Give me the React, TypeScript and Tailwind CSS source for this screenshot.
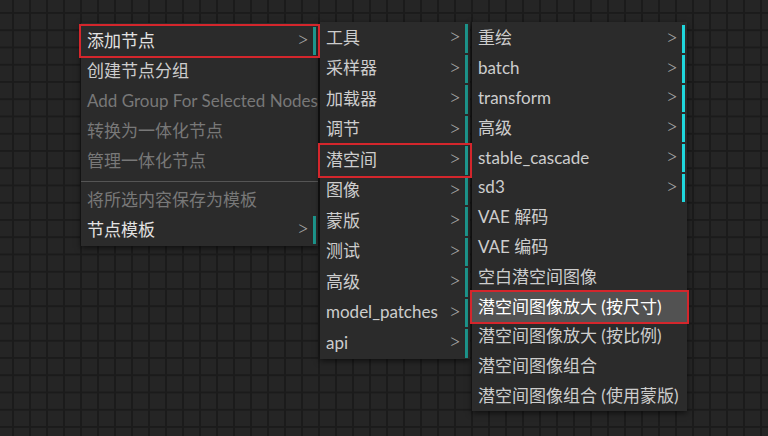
type Item = {
  label: string;
  sub?: boolean;
  tone?: "bright" | "normal" | "dim";
  boxed?: boolean;
  active?: boolean;
};

const mainMenu: (Item | "sep")[] = [
  { label: "添加节点", sub: true, tone: "bright", boxed: true },
  { label: "创建节点分组" },
  { label: "Add Group For Selected Nodes", tone: "dim" },
  { label: "转换为一体化节点", tone: "dim" },
  { label: "管理一体化节点", tone: "dim" },
  "sep",
  { label: "将所选内容保存为模板", tone: "dim" },
  { label: "节点模板", sub: true, tone: "bright" },
];

const categoryMenu: Item[] = [
  { label: "工具", sub: true },
  { label: "采样器", sub: true },
  { label: "加载器", sub: true },
  { label: "调节", sub: true },
  { label: "潜空间", sub: true, boxed: true },
  { label: "图像", sub: true },
  { label: "蒙版", sub: true },
  { label: "测试", sub: true },
  { label: "高级", sub: true },
  { label: "model_patches", sub: true },
  { label: "api", sub: true },
];

const latentMenu: Item[] = [
  { label: "重绘", sub: true },
  { label: "batch", sub: true },
  { label: "transform", sub: true },
  { label: "高级", sub: true },
  { label: "stable_cascade", sub: true },
  { label: "sd3", sub: true },
  { label: "VAE 解码" },
  { label: "VAE 编码" },
  { label: "空白潜空间图像" },
  { label: "潜空间图像放大 (按尺寸)", boxed: true, active: true },
  { label: "潜空间图像放大 (按比例)" },
  { label: "潜空间图像组合" },
  { label: "潜空间图像组合 (使用蒙版)" },
];

function Row({ item, height, bar }: { item: Item; height: string; bar: string }) {
  const tone =
    item.active
      ? "text-white"
      : item.tone === "bright"
      ? "text-[#e2e2e2]"
      : item.tone === "dim"
      ? "text-[#787878]"
      : "text-[#cdcdcd]";

  return (
    <div
      className={`relative flex items-center pl-[6px] pr-[2px] ${height} ${
        item.active ? "bg-[#525252]" : ""
      } ${item.boxed ? "z-10 outline-2 outline-[#d4262c]" : ""}`}
    >
      <span className={`flex-1 -mt-[2px] whitespace-nowrap ${tone}`}>{item.label}</span>
      {item.sub && (
        <>
          <span className="mr-[4px] -mt-[5px] text-[21px] font-light text-[#a8a8a8]">&gt;</span>
          <span className={`w-[3px] self-stretch my-[1px] ${bar}`} />
        </>
      )}
    </div>
  );
}

export default function App() {
  return (
    <div className="relative w-[768px] h-[436px] overflow-hidden bg-[#252525] bg-[linear-gradient(to_right,#1b1b1b_2px,transparent_2px),linear-gradient(to_bottom,#1b1b1b_2px,transparent_2px)] bg-[size:17px_17.25px] bg-[position:12px_12px] font-['Lato','Noto_Sans_CJK_SC',sans-serif] text-[17px] leading-none">
      {/* main context menu */}
      <div className="absolute left-[81px] top-[23px] w-[237px] pt-[3px] pb-[1px] bg-[#2b2b2b] shadow-[0_2px_6px_rgba(0,0,0,0.6)]">
        {mainMenu.map((item, i) =>
          item === "sep" ? (
            <div key={i} className="mt-[5px] mb-[3px] h-px bg-[#555]" />
          ) : (
            <Row key={i} item={item} height="h-[30px]" bar="bg-[#1d958c]" />
          )
        )}
      </div>

      {/* node categories */}
      <div className="absolute left-[320px] top-[22px] w-[150px] pt-px bg-[#2b2b2b] shadow-[0_2px_6px_rgba(0,0,0,0.6)]">
        {categoryMenu.map((item, i) => (
          <Row key={i} item={item} height="h-[30.5px]" bar="bg-[#1d958c]" />
        ))}
      </div>

      {/* latent nodes */}
      <div className="absolute left-[472px] top-[22px] w-[215px] pt-[2px] bg-[#2b2b2b] shadow-[0_2px_6px_rgba(0,0,0,0.6)]">
        {latentMenu.map((item, i) => (
          <Row key={i} item={item} height="h-[29.8px]" bar="bg-[#1fd6dc]" />
        ))}
      </div>
    </div>
  );
}
